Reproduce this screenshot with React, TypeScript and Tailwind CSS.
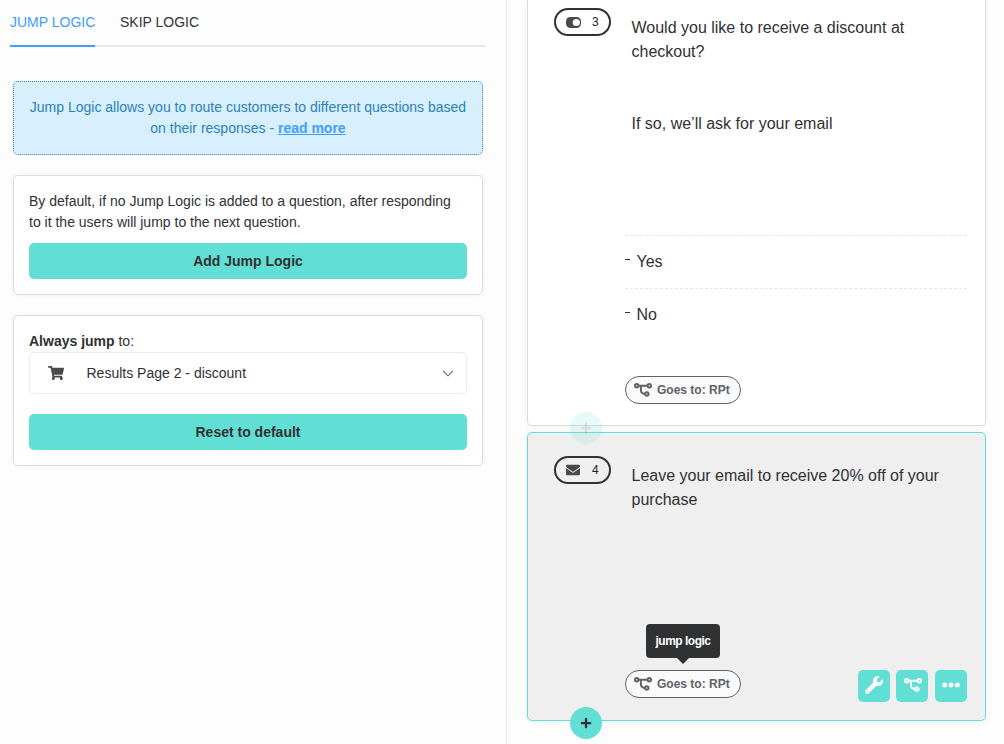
import React from "react";
import { FaShoppingCart, FaEnvelope, FaWrench, FaPlus } from "react-icons/fa";

function BranchIcon({ className }: { className: string }) {
  return (
    <svg viewBox="0 0 18 14" className={className} fill="none" stroke="currentColor">
      <circle cx="2.7" cy="2.8" r="1.7" strokeWidth="2" />
      <circle cx="15.3" cy="2.8" r="1.7" strokeWidth="2" />
      <circle cx="12.8" cy="11" r="1.7" strokeWidth="2" />
      <path d="M4.4 2.8H13.6M6.9 2.8V7.2C6.9 9.4 8.2 10.7 11 10.9" strokeWidth="2" />
    </svg>
  );
}

function ToggleIcon() {
  return (
    <svg viewBox="0 0 15 11" className="h-[11px] w-[15px]">
      <rect width="15" height="11" rx="4.5" fill="#4a4a4a" />
      <circle cx="10.3" cy="5.5" r="3.6" fill="#fff" />
    </svg>
  );
}

function Card({ children }: { children: React.ReactNode }) {
  return (
    <section className="mt-5 mr-[23px] ml-[13px] rounded-[5px] border border-[#dcdcdc] bg-white p-[15px] shadow-[0_0_5px_rgba(0,0,0,0.06)]">
      {children}
    </section>
  );
}

function Action({ children }: { children: React.ReactNode }) {
  return (
    <button className="block h-9 w-full rounded-[5px] bg-[#62dfd5] text-center text-sm font-bold text-[#303133]">
      {children}
    </button>
  );
}

function NumberPill({ icon, value }: { icon: React.ReactNode; value: number }) {
  return (
    <div className="flex h-7 w-[57px] shrink-0 items-center rounded-full border-2 border-[#303133] pl-2.5 text-xs text-[#222]">
      <span className="flex w-[26px] items-center">{icon}</span>
      <span>{value}</span>
    </div>
  );
}

function GoesTo() {
  return (
    <div className="flex h-7 w-[116px] items-center rounded-full border border-[#606266] bg-[#fafafa] pl-2 text-xs font-bold text-[#606266]">
      <BranchIcon className="h-3.5 w-[18px]" />
      <span className="ml-[5px] whitespace-nowrap">Goes to: RPt</span>
    </div>
  );
}

function Answer({ label }: { label: string }) {
  return (
    <div className="flex h-[53px] border-t border-dashed border-[#e6e6e6]">
      <span className="mt-[23px] h-px w-[5px] bg-[#303133]" />
      <span className="ml-[6.5px] pt-3.5 leading-6">{label}</span>
    </div>
  );
}

export default function App() {
  return (
    <div className="flex h-[744px] w-[1004px] overflow-hidden bg-[#fdfdfd] font-['Liberation_Sans',Arial,sans-serif] text-sm text-[#303133]">
      <aside className="w-[507px] shrink-0 border-r border-[#ebebeb]">
        <nav className="mx-2.5 flex h-[47px] w-[476px] border-b-2 border-[#e4e7ed]">
          <div className="mr-[25px] h-[47px] w-[85px] shrink-0 border-b-2 border-[#409eff] pt-3 leading-5 whitespace-nowrap text-[#409eff]">JUMP LOGIC</div>
          <div className="pt-3 leading-5">SKIP LOGIC</div>
        </nav>
        <p className="mt-[34px] mr-[23px] ml-[13px] h-[74px] rounded-[5px] border border-dotted border-[#2b83b6] bg-[#d8effd] pt-[15px] text-center leading-[21px] whitespace-nowrap text-[#2b83b6]">
          Jump Logic allows you to route customers to different questions based<br />
          on their responses - <a className="font-bold text-[#409eff] underline">read more</a>
        </p>
        <Card>
          <p className="mb-2.5 leading-[21px] whitespace-nowrap">
            By default, if no Jump Logic is added to a question, after responding<br />
            to it the users will jump to the next question.
          </p>
          <Action>Add Jump Logic</Action>
        </Card>
        <Card>
          <p className="leading-[21px]"><b>Always jump</b> to:</p>
          <div className="mb-5 flex h-[42px] items-center rounded-[5px] border border-[#ebebeb] pr-3 pl-[18px]">
            <FaShoppingCart className="h-4 w-4 text-[#4a4a4a]" />
            <span className="ml-[22.5px]">Results Page 2 - discount</span>
            <svg viewBox="0 0 12 7" className="mt-px ml-auto h-[7px] w-3" fill="none" stroke="#707070">
              <path d="M1 1L6 5.8L11 1" strokeWidth="1.1" />
            </svg>
          </div>
          <Action>Reset to default</Action>
        </Card>
      </aside>

      <main className="ml-5 flex w-[459px] shrink-0 flex-col gap-1.5 text-base">
        <article className="relative h-[426px] rounded-b-[5px] border border-t-0 border-[#dcdcdc] bg-white shadow-[0_0_5px_rgba(0,0,0,0.06)]">
          <div className="flex items-start gap-[20.5px] pt-2 pl-[26px]">
            <NumberPill icon={<ToggleIcon />} value={3} />
            <div className="mt-2 h-[219px] leading-6">
              Would you like to receive a discount at<br />checkout?
              <p className="mt-12">If so, we’ll ask for your email</p>
            </div>
          </div>
          <div className="mr-[18px] ml-[97px]">
            <Answer label="Yes" />
            <Answer label="No" />
            <div className="mt-[35px]"><GoesTo /></div>
          </div>
          <button className="absolute top-[412px] left-[42px] z-10 flex h-8 w-8 items-center justify-center rounded-full bg-[#62dfd5] pr-px opacity-15">
            <FaPlus className="h-3 w-3" />
          </button>
        </article>

        <article className="relative h-[289px] shrink-0 rounded-[5px] border border-[#62dfd5] bg-[#efefef] shadow-[0_0_5px_rgba(0,0,0,0.06)]">
          <div className="flex h-[237px] items-start gap-[20.5px] pt-[23px] pl-[26px]">
            <NumberPill icon={<FaEnvelope className="h-3.5 w-3.5 text-[#4a4a4a]" />} value={4} />
            <p className="mt-2 leading-6">
              Leave your email to receive 20% off of your<br />purchase
            </p>
          </div>
          <div className="mr-[18px] ml-[97px] flex items-start">
            <div className="relative mr-auto">
              <GoesTo />
              <div className="absolute top-[-46px] left-[21px] flex h-[34px] w-[74px] items-center justify-center rounded bg-[#303133] text-xs font-bold tracking-[-0.5px] text-white">
                jump logic
                <svg viewBox="0 0 12 6" className="absolute top-[34px] left-[31px] h-1.5 w-3" fill="#303133"><path d="M0 0H12L6 6Z" /></svg>
              </div>
            </div>
            <button className="mr-1.5 flex h-8 w-8 justify-center rounded-[5px] bg-[#62dfd5] pt-[6px] text-white"><FaWrench className="h-[18px] w-[18px]" /></button>
            <button className="mr-[7px] flex h-8 w-8 justify-center rounded-[5px] bg-[#62dfd5] pt-2 pl-0.5 text-white"><BranchIcon className="h-3.5 w-[18px]" /></button>
            <button className="flex h-8 w-8 justify-center rounded-[5px] bg-[#62dfd5] pt-3 text-white">
              <svg viewBox="0 0 18 6" className="h-1.5 w-[18px]" fill="currentColor"><circle cx="2.7" cy="3" r="2.5" /><circle cx="9" cy="3" r="2.5" /><circle cx="15.3" cy="3" r="2.5" /></svg>
            </button>
          </div>
          <button className="absolute top-[274px] left-[42px] flex h-8 w-8 items-center justify-center rounded-full bg-[#62dfd5] pr-px">
            <FaPlus className="h-3 w-3" />
          </button>
        </article>
      </main>
    </div>
  );
}
